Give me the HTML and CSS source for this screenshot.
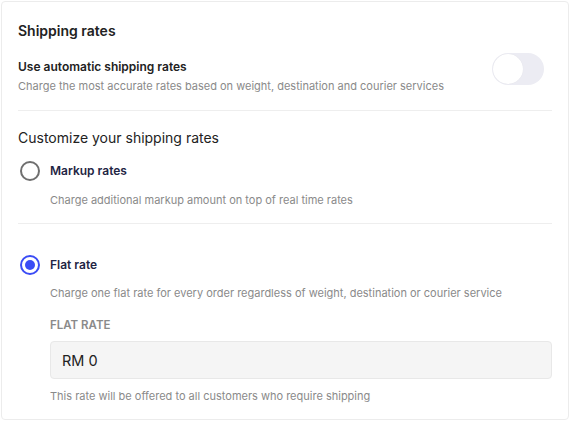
FILE: index.html
```html
<!DOCTYPE html>
<html>
<head>
<meta charset="utf-8">
<link rel="stylesheet" href="styles.css">
</head>
<body>
<div class="card">
  <h2 class="title">Shipping rates</h2>
  <div class="auto-row">
    <div class="auto-text">
      <div class="auto-label">Use automatic shipping rates</div>
      <div class="desc">Charge the most accurate rates based on weight, destination and courier services</div>
    </div>
    <div class="toggle"><span class="knob"></span></div>
  </div>
  <div class="divider"></div>
  <h3 class="subtitle">Customize your shipping rates</h3>
  <div class="option option-markup">
    <div class="option-head">
      <span class="radio"></span>
      <span class="option-label">Markup rates</span>
    </div>
    <div class="option-body">
      <div class="desc">Charge additional markup amount on top of real time rates</div>
    </div>
  </div>
  <div class="divider divider-inner"></div>
  <div class="option option-flat">
    <div class="option-head">
      <span class="radio radio-on"></span>
      <span class="option-label">Flat rate</span>
    </div>
    <div class="option-body">
      <div class="desc">Charge one flat rate for every order regardless of weight, destination or courier service</div>
      <div class="field-label">FLAT RATE</div>
      <div class="input">RM 0</div>
      <div class="desc help">This rate will be offered to all customers who require shipping</div>
    </div>
  </div>
</div>
</body>
</html>
```
FILE: styles.css
```css
* { box-sizing: border-box; }
html, body { margin: 0; padding: 0; background: #ffffff; }
body {
  font-family: Inter, "Noto Sans", sans-serif;
  color: #222;
  padding: 1px 4px 0 1px;
}
.card {
  width: 568px;
  height: 419px;
  border: 1px solid #ececec;
  border-radius: 4px;
  padding: 19px 16px 0 16px;
}
.title {
  margin: 0;
  font-size: 14px;
  font-weight: 600;
  line-height: 20px;
  color: #222;
}
.auto-row {
  display: flex;
  align-items: flex-start;
  justify-content: space-between;
  margin-top: 17px;
  padding-right: 8px;
}
.auto-label {
  font-size: 12px;
  font-weight: 600;
  line-height: 18px;
  color: #222;
}
.desc {
  font-size: 11px;
  line-height: 16px;
  color: #8a8a8a;
  margin-top: 2px;
}
.toggle {
  width: 52px;
  height: 32px;
  border-radius: 16px;
  background: #ececf3;
  padding: 1px;
  margin-top: -5px;
}
.knob {
  display: block;
  width: 30px;
  height: 30px;
  border-radius: 50%;
  background: #fff;
  box-shadow: 0 0 1px rgba(0,0,0,0.08);
}
.divider {
  height: 1px;
  background: #eeeeee;
  margin-top: 16px;
}
.subtitle {
  margin: 17px 0 0 0;
  font-size: 14px;
  font-weight: 400;
  line-height: 20px;
  color: #222;
}
.option-markup { margin-top: 13px; }
.option-head {
  display: flex;
  align-items: center;
  gap: 10px;
  padding-left: 2px;
}
.radio {
  width: 20px;
  height: 20px;
  border-radius: 50%;
  border: 2px solid #6f6f6f;
  flex: none;
  display: flex;
  align-items: center;
  justify-content: center;
}
.radio-on { border-color: #3b4cf5; }
.radio-on::after {
  content: "";
  width: 10px;
  height: 10px;
  border-radius: 50%;
  background: #3b4cf5;
}
.option-label {
  font-size: 12px;
  font-weight: 600;
  color: #1f2544;
  line-height: 18px;
}
.option-body { padding-left: 32px; margin-top: 11px; }
.divider-inner { margin-top: 15px; }
.option-flat { margin-top: 31px; }
.option-flat .option-body { margin-top: 10px; }
.field-label {
  margin-top: 16px;
  font-size: 11.5px;
  font-weight: 600;
  color: #8a8a8a;
  line-height: 16px;
}
.input {
  margin-top: 8px;
  height: 38px;
  background: #f5f5f5;
  border: 1px solid #e8e8e8;
  border-radius: 4px;
  padding: 0 11px;
  display: flex;
  align-items: center;
  font-size: 14.5px;
  color: #222;
}
.help { margin-top: 9px; }
```
